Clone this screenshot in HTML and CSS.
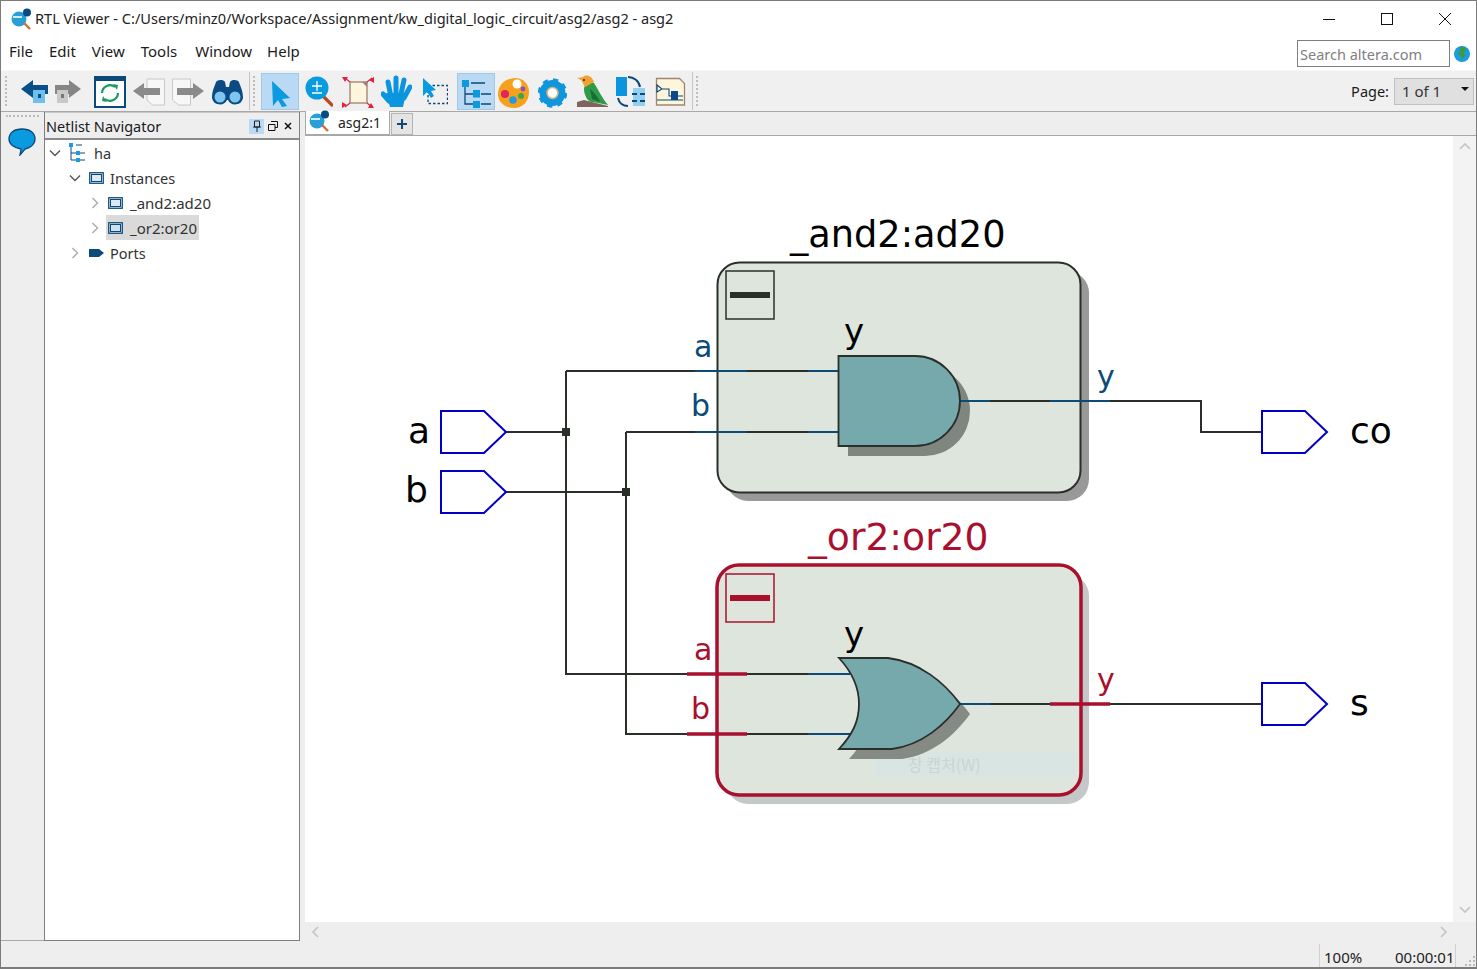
FILE: index.html
```html
<!DOCTYPE html>
<html lang="en">
<head>
<meta charset="utf-8">
<title>RTL Viewer</title>
<link rel="stylesheet" href="styles.css">
</head>
<body>
<div class="window">
  <header class="titlebar">
    <svg class="applogo" viewBox="0 0 22 22" width="22" height="22"><circle cx="9" cy="11" r="7.5" fill="#27a0d8"/><path d="M3 9h9" stroke="#fff" stroke-width="1.6"/><circle cx="17" cy="4.5" r="4" fill="#0b4a7e"/><path d="M14 15l6 6" stroke="#c7703a" stroke-width="2.4"/></svg>
    <span class="wintitle">RTL Viewer - C:/Users/minz0/Workspace/Assignment/kw_digital_logic_circuit/asg2/asg2 - asg2</span>
    <div class="winbtns">
      <span class="winbtn"><svg viewBox="0 0 14 14" width="14" height="14"><path d="M1 7.5h12" stroke="#111" fill="none"/></svg></span>
      <span class="winbtn"><svg viewBox="0 0 14 14" width="14" height="14"><rect x="1.5" y="1.5" width="11" height="11" stroke="#111" fill="none"/></svg></span>
      <span class="winbtn"><svg viewBox="0 0 14 14" width="14" height="14"><path d="M1 1l12 12M13 1L1 13" stroke="#111" fill="none"/></svg></span>
    </div>
  </header>

  <nav class="menubar">
    <span class="menuitem">File</span>
    <span class="menuitem">Edit</span>
    <span class="menuitem">View</span>
    <span class="menuitem">Tools</span>
    <span class="menuitem menuwide">Window</span>
    <span class="menuitem">Help</span>
    <div class="searchwrap">
      <div class="searchbox">Search altera.com</div>
      <svg class="globe" viewBox="0 0 16 16" width="16" height="16"><circle cx="8" cy="8" r="8" fill="#1d9be0"/><path d="M6 1c3-1 6 1 6 3l-2 2 1 3-3 5-1-4-3-2 2-3z" fill="#3f9a3c"/></svg>
    </div>
  </nav>

  <div class="toolbar">
    <span class="grip gripfirst"></span>
    <div class="toolgroup groupone">
      <svg viewBox="21 72 27 37" width="27" height="37"><path d="M21 88l12-9v5h15v9H33v4z" fill="#0b4f8a"/><rect x="33" y="89" width="12" height="13" fill="#6fc0ea"/><rect x="38" y="93" width="3" height="4" fill="#0b4f8a"/></svg>
      <svg viewBox="55 72 26 37" width="26" height="37"><path d="M81 88l-12-9v5H55v9h14v4z" fill="#858585"/><rect x="57" y="89" width="11" height="13" fill="#c9c9c9"/><rect x="61" y="93" width="3" height="4" fill="#777"/></svg>
      <svg class="gapwide" viewBox="94 72 32 37" width="32" height="37"><rect x="95" y="76" width="30" height="30" fill="#fff" stroke="#0b4a78" stroke-width="2"/><rect x="94" y="75" width="32" height="5" fill="#0b4a78"/><path d="M102 92a8 8 0 0 1 13-6" fill="none" stroke="#1a9a5a" stroke-width="2.2"/><path d="M118 92a8 8 0 0 1-13 6" fill="none" stroke="#1a9a5a" stroke-width="2.2"/><path d="M113 83l5 1-1 5zM107 101l-5-1 1-5z" fill="#1a9a5a"/></svg>
      <svg viewBox="133 72 32 37" width="32" height="37"><path d="M147 78h17.500v26h-12l-5.500-5z" fill="#f7f7f7" stroke="#c8c8c8"/><path d="M133 90l11-8v5h16v7h-16v4z" fill="#8a8a8a"/></svg>
      <svg viewBox="172 72 32 37" width="32" height="37"><path d="M172.500 78h18v26h-12l-6-5z" fill="#f7f7f7" stroke="#c8c8c8"/><path d="M204 90l-11-8v5h-16v7h16v4z" fill="#8a8a8a"/></svg>
      <svg class="gapeight" viewBox="212 72 31 37" width="31" height="37"><path d="M212 97c0-8 3-12 4-16 1-2 7-3 9 0l1 5h3l1-5c2-3 8-2 9 0 1 4 4 8 4 16a8 8 0 0 1-15 2h-1a8 8 0 0 1-15-2z" fill="#0b4a82"/><circle cx="220" cy="96" r="5.500" fill="#7cc6f0"/><circle cx="235" cy="96" r="5.500" fill="#7cc6f0"/></svg>
    </div>
    <span class="tooldivider"></span>
    <span class="grip gripsecond"></span>
    <div class="toolgroup grouptwo">
      <span class="toolbtn"><svg viewBox="262 72 36 35" width="36" height="35"><path d="M272 79l18 17-8 1 5 7-5 1-4-7-5 6z" fill="#0a9ae0"/></svg></span>
      <svg class="gapsix" viewBox="305 72 28 37" width="28" height="37"><path d="M324 96l8 8" stroke="#b8481e" stroke-width="3.200" stroke-linecap="round"/><circle cx="317" cy="87" r="11.500" fill="#0a9ae0"/><path d="M312 85h10M317 80v10M312 92h10" stroke="#fff" stroke-width="1.300"/></svg>
      <svg class="gapeight" viewBox="341 72 34 37" width="34" height="37"><rect x="350" y="81" width="17" height="21" fill="#fdf5dc" stroke="#a07f70" stroke-width="1.300"/><path d="M362 81h5v5z" fill="#a07f70"/><path d="M350 81l-5-4M367 81l5-4M350 102l-5 4M367 102l5 4" stroke="#e2223f" stroke-width="1.200" fill="none"/><path d="M342 76l6 0-3 5zM374 76l0 6-5-3zM342 107l0-6 5 3zM374 107l-6 0 3-5z" fill="#e2223f"/></svg>
      <svg class="gapsix" viewBox="381 72 31 37" width="31" height="37"><path d="M386 92h20l-3 14h-13z" fill="#0a95de"/><path d="M391 96l-3-15M396 93V77M401 93l3-14M404 97l6-11M389 100l-6-7" stroke="#0a95de" stroke-width="5" stroke-linecap="round" fill="none"/></svg>
      <svg class="gapten" viewBox="422 72 26 37" width="26" height="37"><rect x="428" y="84.500" width="19.500" height="18" fill="none" stroke="#0b4a78" stroke-width="1.300" stroke-dasharray="2.500 2"/><path d="M423 77l13 12-5 1 3 5-3 2-4-6-4 4z" fill="#0a9ae0"/></svg>
      <span class="toolbtn gapnine"><svg viewBox="458 72 36 35" width="36" height="35"><path d="M465 85v17h8M465 92h8M471 81h14M481 92h10M481 102h10" stroke="#0b4a78" stroke-width="1.300" fill="none"/><rect x="462" y="78" width="7" height="7" fill="#0a9ae0"/><rect x="473" y="88" width="7" height="7.500" fill="#0a9ae0"/><rect x="473" y="99" width="7" height="7" fill="#0a9ae0"/></svg></span>
      <svg class="gapthree" viewBox="498 72 31 37" width="31" height="37"><path d="M498 93c0-10 9-16 17-16 8 0 14 6 14 14 0 9-6 16-15 16-8 0-16-5-16-14z" fill="#f7a01c"/><circle cx="517" cy="83" r="4.500" fill="#fff"/><circle cx="505" cy="93" r="4" fill="#e0245e"/><circle cx="513" cy="99" r="3.800" fill="#1d9be0"/><circle cx="521" cy="95" r="3" fill="#3aa84a"/><circle cx="523" cy="88" r="2.400" fill="#8a4fc7"/></svg>
      <svg class="gapnine" viewBox="538 72 29 37" width="29" height="37"><circle cx="552.500" cy="92" r="9" fill="none" stroke="#0f96dc" stroke-width="8"/><circle cx="552.500" cy="92" r="12.500" fill="none" stroke="#0f96dc" stroke-width="4.500" stroke-dasharray="5 4.820"/><circle cx="552.500" cy="92" r="5.500" fill="#fff" stroke="#d2b67d" stroke-width="1.500"/></svg>
      <svg class="gapeight" viewBox="575 72 33 37" width="33" height="37"><path d="M577 106v-5l7-2 24 6v1z" fill="#80645c"/><path d="M584 88c0-4 5-7 10-6 4 6 8 15 14 22l-15-3c-5 1-9-7-9-13z" fill="#2f9a47"/><path d="M590 88c3 2 8 8 10 13l-8-3z" fill="#186f36"/><path d="M577 77l6-1c2-3 9-2 11 5l-9 5c-2-3-3-6-4-7z" fill="#f2a12e"/><circle cx="584" cy="79" r="1" fill="#222"/></svg>
      <svg class="gapseven" viewBox="615 72 32 37" width="32" height="37"><path d="M628 76c6 0 11 4 12 10M628 105c-5 0-9-3-10-8" fill="none" stroke="#0b4a78" stroke-width="2"/><rect x="616" y="76" width="11" height="19" fill="#0a95de"/><rect x="633" y="87" width="12" height="18" fill="#92d0f2"/><path d="M632 93h5M640 93h5M632 100h5M640 100h5" stroke="#0b4a78" stroke-width="2"/></svg>
      <svg class="gapeight" viewBox="655 72 31 37" width="31" height="37"><path d="M656.500 77.500h23l5 5v21.500h-28z" fill="#fdf5dc" stroke="#a08670" stroke-width="1.300"/><path d="M657 84l5 4-5 3zM662 88h7v7h14M657 99h26" fill="none" stroke="#0b4a78" stroke-width="1.100"/><rect x="671" y="90" width="7" height="9" fill="#0b4a8a"/></svg>
    </div>
    <span class="tooldivider dividerend"></span>
    <span class="grip gripthird"></span>
    <div class="pagebox">
      <span class="pagelabel">Page:</span>
      <div class="combo"><span>1 of 1</span><span class="caret"></span></div>
    </div>
  </div>

  <main class="main">
    <aside class="dockstrip">
      <span class="dockgrip"></span>
      <svg class="bubble" viewBox="0 0 28 28" width="28" height="28"><path d="M14 1c8 0 13 4 13 10 0 6-6 9-10 10l-5 6 1-6C6 20 1 16 1 11 1 5 6 1 14 1z" fill="#0a9ae0" stroke="#0b4a78" stroke-width="1.300"/></svg>
    </aside>

    <section class="navigator">
      <div class="navheader">
        <span class="navtitle">Netlist Navigator</span>
        <span class="navbtn navpin"><svg viewBox="0 0 10 12" width="10" height="12"><path d="M2.500 1h5v6h-5zM1 7h8M5 7v5" fill="none" stroke="#222"/></svg></span>
        <span class="navbtn"><svg viewBox="0 0 10 10" width="10" height="10"><path d="M3 .5h6.500v6H7M.5 3.500h6.500v6H.5z" fill="none" stroke="#111"/></svg></span>
        <span class="navbtn"><svg viewBox="0 0 8 8" width="8" height="8"><path d="M1 1l6 6M7 1L1 7" stroke="#111" stroke-width="1.500"/></svg></span>
      </div>
      <ul class="tree">
        <li class="treerow lvl0">
          <svg class="chev" viewBox="0 0 12 12" width="12" height="12"><path d="M1 3.500l5 5 5-5" fill="none" stroke="#555" stroke-width="1.400"/></svg>
          <svg class="hicon" viewBox="0 0 20 20" width="20" height="20"><path d="M3 4v13h6M3 10h6M8 2h6M12 10h5M12 17h5" fill="none" stroke="#0b4a78"/><rect x="1" y="0" width="4" height="4" fill="#1d9be0"/><rect x="8" y="8" width="4" height="4" fill="#1d9be0"/><rect x="8" y="15" width="4" height="4" fill="#1d9be0"/></svg>
          <span>ha</span>
        </li>
        <li class="treerow lvl1">
          <svg class="chev" viewBox="0 0 12 12" width="12" height="12"><path d="M1 3.500l5 5 5-5" fill="none" stroke="#555" stroke-width="1.400"/></svg>
          <svg class="inst" viewBox="0 0 15 12" width="15" height="12"><rect x=".75" y=".75" width="13.500" height="10.500" fill="#fff" stroke="#0b4a78" stroke-width="1.300"/><rect x="2.500" y="2.500" width="10" height="7" fill="#dce8f2" stroke="#0b4a78"/></svg>
          <span>Instances</span>
        </li>
        <li class="treerow lvl2">
          <svg class="chev" viewBox="0 0 12 12" width="12" height="12"><path d="M3.500 1l5 5-5 5" fill="none" stroke="#aaa" stroke-width="1.400"/></svg>
          <svg class="inst" viewBox="0 0 15 12" width="15" height="12"><rect x=".75" y=".75" width="13.500" height="10.500" fill="#fff" stroke="#0b4a78" stroke-width="1.300"/><rect x="2.500" y="2.500" width="10" height="7" fill="#dce8f2" stroke="#0b4a78"/></svg>
          <span>_and2:ad20</span>
        </li>
        <li class="treerow lvl2 selected">
          <svg class="chev" viewBox="0 0 12 12" width="12" height="12"><path d="M3.500 1l5 5-5 5" fill="none" stroke="#aaa" stroke-width="1.400"/></svg>
          <span class="selbox">
            <svg class="inst" viewBox="0 0 15 12" width="15" height="12"><rect x=".75" y=".75" width="13.500" height="10.500" fill="#f2f2f2" stroke="#0b4a78" stroke-width="1.300"/><rect x="2.500" y="2.500" width="10" height="7" fill="#cfdfec" stroke="#0b4a78"/></svg>
            <span>_or2:or20</span>
          </span>
        </li>
        <li class="treerow lvl1">
          <svg class="chev" viewBox="0 0 12 12" width="12" height="12"><path d="M3.500 1l5 5-5 5" fill="none" stroke="#aaa" stroke-width="1.400"/></svg>
          <svg class="inst" viewBox="0 0 15 8" width="15" height="8"><path d="M0 0h10l5 4-5 4H0z" fill="#0b4a78"/></svg>
          <span>Ports</span>
        </li>
      </ul>
    </section>

    <section class="workspace">
      <div class="tabbar">
        <div class="tab">
          <svg class="tabicon" viewBox="0 0 22 22" width="22" height="22"><circle cx="9" cy="11" r="7.500" fill="#27a0d8"/><path d="M3 9h9" stroke="#fff" stroke-width="1.600"/><circle cx="17" cy="4.500" r="4" fill="#0b4a7e"/><path d="M14 15l6 6" stroke="#c7703a" stroke-width="2.400"/></svg>
          <span>asg2:1</span>
        </div>
        <div class="addtab"><svg viewBox="0 0 10 10" width="10" height="10"><path d="M5 0v10M0 5h10" stroke="#0b4a78" stroke-width="2"/></svg></div>
      </div>
      <div class="viewrow">
        <div class="canvas">
          <svg class="diagram" viewBox="305 136 1148 786" width="1148" height="786">
            <!-- and block -->
            <rect x="726" y="271" width="363" height="230" rx="22" fill="#999"/>
            <rect x="717.500" y="262.500" width="363" height="230" rx="22" class="blockfill" stroke="#2a2f2a" stroke-width="2"/>
            <rect x="726" y="271" width="48" height="48" fill="none" stroke="#2a2f2a" stroke-width="1.500"/>
            <rect x="730" y="292" width="40" height="6" fill="#2a2f2a"/>
            <!-- or block -->
            <rect x="726" y="574" width="363" height="230" rx="22" fill="#c4c8c8"/>
            <rect x="717" y="565" width="364" height="230" rx="22" class="blockfill" stroke="#a8102e" stroke-width="3.500"/>
            <rect x="726" y="574" width="48" height="48" fill="none" stroke="#a8102e" stroke-width="1.500"/>
            <rect x="730" y="595" width="40" height="6" fill="#a8102e"/>
            <!-- watermark -->
            <rect x="875" y="753" width="200" height="24" fill="#d8e5e2"/>
            <text x="908" y="771" class="watermark">창 캡처(W)</text>
            <!-- gate shadows -->
            <path d="M848 366H925A45 45 0 0 1 925 456H848Z" fill="#7f857f"/>
            <path d="M849 668H898C930 672 955 693 970 714C955 735 932 755 902 759H849C862 745 869 732 869 714C869 698 862 682 849 668Z" fill="#858a85"/>
            <!-- wires -->
            <g class="wire">
              <path d="M506 432H566M566 371V674H850M506 492H626M626 432V734H850M566 371H838M626 432H838M960 401H1201V432H1262M960 704H1262"/>
            </g>
            <g class="wireblue">
              <path d="M695 371H747M808 371H838M695 432H747M808 432H838M960 401H990M1050 401H1110M808 674H850M808 734H850M960 704H990"/>
            </g>
            <g class="stub">
              <path d="M687 674H747M687 734H747M1050 704H1110"/>
            </g>
            <rect x="562" y="428" width="8" height="8" fill="#2a2f2a"/>
            <rect x="622" y="488" width="8" height="8" fill="#2a2f2a"/>
            <!-- gates -->
            <path d="M838.500 356H915A45 45 0 0 1 915 446H838.500Z" fill="#76a9ab" stroke="#2a2f2a" stroke-width="1.800"/>
            <path d="M839 658H888C920 662 945 683 960 704C945 725 922 745 892 749H839C852 735 859 722 859 704C859 688 852 672 839 658Z" fill="#76a9ab" stroke="#2a2f2a" stroke-width="1.800"/>
            <!-- ports -->
            <path class="port" d="M441 411H484L506 432L484 453H441Z"/>
            <path class="port" d="M441 471H484L506 492L484 513H441Z"/>
            <path class="port" d="M1262 411H1305L1327 432L1305 453H1262Z"/>
            <path class="port" d="M1262 683H1305L1327 704L1305 725H1262Z"/>
            <!-- labels -->
            <text x="790" y="247" class="lbl big andname">_and2:ad20</text>
            <text x="808" y="550" class="lbl big orname red">_or2:or20</text>
            <text x="844" y="343" class="lbl big cellpin">y</text>
            <text x="844" y="646" class="lbl big cellpin">y</text>
            <text x="694" y="357" class="lbl mid blue">a</text>
            <text x="691" y="416" class="lbl mid blue">b</text>
            <text x="1097" y="387" class="lbl mid blue">y</text>
            <text x="694" y="660" class="lbl mid red">a</text>
            <text x="691" y="719" class="lbl mid red">b</text>
            <text x="1097" y="690" class="lbl mid red">y</text>
            <text x="408" y="443" class="lbl big">a</text>
            <text x="405" y="502" class="lbl big">b</text>
            <text x="1350" y="443" class="lbl big">co</text>
            <text x="1350" y="715" class="lbl big">s</text>
          </svg>
        </div>
        <div class="vscroll">
          <svg viewBox="0 0 12 8" width="12" height="8"><path d="M1 7l5-5 5 5" fill="none" stroke="#c4c4c4" stroke-width="1.600"/></svg>
          <svg viewBox="0 0 12 8" width="12" height="8"><path d="M1 1l5 5 5-5" fill="none" stroke="#c4c4c4" stroke-width="1.600"/></svg>
        </div>
      </div>
      <div class="hscroll">
        <svg viewBox="0 0 8 12" width="8" height="12"><path d="M7 1L2 6l5 5" fill="none" stroke="#c4c4c4" stroke-width="1.600"/></svg>
        <svg viewBox="0 0 8 12" width="8" height="12"><path d="M1 1l5 5-5 5" fill="none" stroke="#c4c4c4" stroke-width="1.600"/></svg>
      </div>
    </section>
  </main>

  <footer class="statusbar">
    <span class="statuscell zoomcell">100%</span>
    <span class="statuscell timecell">00:00:01</span>
    <svg class="sizegrip" viewBox="0 0 10 10" width="10" height="10"><path d="M8 0h2v2H8zM4 4h2v2H4zM8 4h2v2H8zM0 8h2v2H0zM4 8h2v2H4zM8 8h2v2H8z" fill="#bbb"/></svg>
  </footer>
</div>
</body>
</html>
```
FILE: styles.css
```css
* { box-sizing: border-box; }
html, body { margin: 0; padding: 0; }
body {
  width: 1477px;
  height: 969px;
  overflow: hidden;
  font-family: "Noto Sans", "Open Sans", sans-serif;
  font-size: 14.5px;
  color: #1a1a1a;
  background: #fff;
}
.window {
  width: 1477px;
  height: 969px;
  display: flex;
  flex-direction: column;
  border: 1px solid #7b7b7b;
  border-bottom-width: 2px;
  background: #eeeeee;
}
.titlebar {
  height: 38px;
  flex: none;
  display: flex;
  align-items: center;
  background: #fff;
  padding-left: 9px;
  padding-bottom: 2px;
}
.applogo { flex: none; }
.wintitle { margin-left: 3px; margin-bottom: 2px; color: #222; font-size: 14.55px; }
.winbtns { margin-left: auto; display: flex; margin-right: 2px; }
.winbtn { width: 58px; height: 36px; display: flex; align-items: center; justify-content: center; }
.menubar {
  height: 31px;
  flex: none;
  display: flex;
  align-items: center;
  background: #fff;
  padding-left: 8px;
  padding-bottom: 8px;
  gap: 16px;
}
.menuitem { font-size: 15px; color: #1a1a1a; }
.menuwide { margin-left: 2px; margin-right: -1px; }
.searchwrap { margin-left: auto; display: flex; align-items: center; gap: 4px; margin-right: 6px; align-self: flex-start; margin-top: 1px; }
.searchbox {
  width: 153px;
  height: 27px;
  border: 1px solid #7f7f7f;
  color: #808080;
  font-size: 14.5px;
  line-height: 27px;
  padding-left: 2px;
  background: #fff;
}
.globe { flex: none; }

.toolbar {
  height: 42px;
  flex: none;
  display: flex;
  align-items: center;
  background: #f0f0f0;
  border-bottom: 1px solid #a8a8a8;
  border-top: 1px solid #f8f8f8;
}
.grip {
  width: 2px;
  height: 30px;
  flex: none;
  border-left: 2px dotted #bdbdbd;
}
.gripfirst { margin-left: 4px; }
.toolgroup { display: flex; align-items: center; gap: 7px; }
.groupone { margin-left: 14px; }
.grouptwo { margin-left: 6px; gap: 0; }
.gapwide { margin-left: 6px; }
.gapeight { margin-left: 8px; }
.groupone .gapeight { margin-left: 1px; }
.gapsix { margin-left: 6px; }
.gapten { margin-left: 10px; }
.gapnine { margin-left: 9px; }
.gapthree { margin-left: 3px; }
.gapseven { margin-left: 7px; }
.tooldivider {
  width: 1px;
  height: 38px;
  flex: none;
  background: #c4c4c4;
  margin-left: 6px;
  margin-right: 3px;
}
.toolbtn {
  width: 38px;
  height: 37px;
  display: flex;
  align-items: center;
  justify-content: center;
  background: #b9d9f5;
  border: 1px solid #a0c8e8;
}
.pagebox { margin-left: auto; display: flex; align-items: center; margin-right: 2px; }
.pagelabel { font-size: 14.5px; margin-right: 5px; }
.combo {
  width: 80px;
  height: 27px;
  background: #e0e0e0;
  border: 1px solid #c0c0c0;
  display: flex;
  align-items: center;
  justify-content: space-between;
  padding: 0 4px 0 7px;
  font-size: 15px;
  color: #333;
}
.caret {
  width: 0;
  height: 0;
  border-left: 4px solid transparent;
  border-right: 4px solid transparent;
  border-top: 4px solid #111;
  margin-bottom: 4px;
}

.main { height: 829px; flex: none; display: flex; }
.dockstrip {
  width: 43px;
  flex: none;
  display: flex;
  flex-direction: column;
  align-items: center;
  padding-top: 3px;
  border-bottom: 1px solid #a8a8a8;
}
.dockgrip { width: 33px; height: 2px; border-top: 2px dotted #bdbdbd; margin-bottom: 11px; }
.bubble { flex: none; margin-left: -1px; }
.navigator {
  width: 256px;
  flex: none;
  display: flex;
  flex-direction: column;
  border: 1px solid #7f7f7f;
  border-top: 0;
  height: 829px;
}
.navheader {
  height: 28px;
  flex: none;
  display: flex;
  align-items: center;
  background: #eeeeee;
  border-bottom: 2px solid #8a8a8a;
  border-top: 1px solid #c8c8c8;
  padding: 1px 4px 0 1px;
}
.navtitle { margin-right: auto; font-size: 14.5px; }
.navbtn { width: 15px; height: 15px; display: flex; align-items: center; justify-content: center; }
.navpin { background: #b9d9f5; margin-right: 1px; }
.tree { list-style: none; margin: 0; padding: 0; background: #fff; flex: 1; }
.treerow { height: 25px; display: flex; align-items: center; font-size: 14.5px; color: #333; }
.lvl0 { padding-left: 4px; }
.lvl1 { padding-left: 24px; }
.lvl2 { padding-left: 44px; font-size: 15px; }
.chev { flex: none; margin-right: 7px; }
.lvl1 .chev { margin-right: 8px; }
.hicon { flex: none; margin-right: 6px; }
.inst { flex: none; margin-right: 6px; }
.selbox { display: flex; align-items: center; height: 25px; background: #dadada; padding: 0 2px 0 2px; margin-left: -2px; }
.treerow.lvl2 .inst { margin-right: 7px; }

.workspace { flex: 1; min-width: 0; display: flex; flex-direction: column; margin-left: 5px; }
.tabbar {
  height: 24px;
  flex: none;
  display: flex;
  align-items: flex-end;
  border-bottom: 1px solid #a8a8a8;
}
.tab {
  width: 85px;
  height: 24px;
  background: #fff;
  border: 1px solid #a8a8a8;
  border-top: 0;
  display: flex;
  align-items: center;
  font-size: 14px;
  padding-left: 2px;
  color: #222;
}
.tabicon { flex: none; margin-right: 8px; margin-top: -3px; }
.addtab {
  width: 22px;
  height: 22px;
  margin-left: 1px;
  background: #e4e4e4;
  border: 1px solid #b4b4b4;
  display: flex;
  align-items: center;
  justify-content: center;
}
.viewrow { height: 786px; flex: none; display: flex; }
.canvas { width: 1148px; flex: none; background: #fff; }
.diagram { display: block; }
.vscroll {
  flex: 1;
  display: flex;
  flex-direction: column;
  align-items: center;
  justify-content: space-between;
  padding: 6px 0 8px;
  background: #f3f3f3;
}
.hscroll {
  height: 19px;
  flex: none;
  display: flex;
  align-items: center;
  justify-content: space-between;
  padding: 0 28px 0 6px;
}
.blockfill { fill: #dde5dd; }
.wire path { fill: none; stroke: #2a2f2a; stroke-width: 2; }
.wireblue path { fill: none; stroke: #0c4a78; stroke-width: 2; }
.stub path { fill: none; stroke: #a8102e; stroke-width: 3.5; }
.port { fill: #fff; stroke: #0000c4; stroke-width: 2; }
.lbl { font-family: "DejaVu Sans", sans-serif; fill: #000; }
.big { font-size: 36px; }
.mid { font-size: 30px; }
.andname { font-size: 36.7px; }
.orname { font-size: 37.7px; }
.cellpin { font-size: 34px; }
.lbl.blue { fill: #0c4a78; }
.lbl.red { fill: #a8102e; }
.watermark { font-family: "Noto Sans CJK KR", sans-serif; font-size: 16px; fill: #c9d5d1; }

.statusbar {
  flex: 1;
  min-height: 0;
  display: flex;
  align-items: stretch;
  justify-content: flex-end;
  font-size: 15px;
  color: #222;
  padding: 3px 1px 0 0;
}
.statuscell { display: flex; align-items: center; padding-top: 2px; }
.zoomcell { width: 76px; padding-left: 4px; border-left: 1px solid #d0d0d0; }
.timecell { width: 61px; border-right: 1px solid #d0d0d0; white-space: nowrap; }
.sizegrip { margin-left: 9px; margin-top: 12px; flex: none; }
```
